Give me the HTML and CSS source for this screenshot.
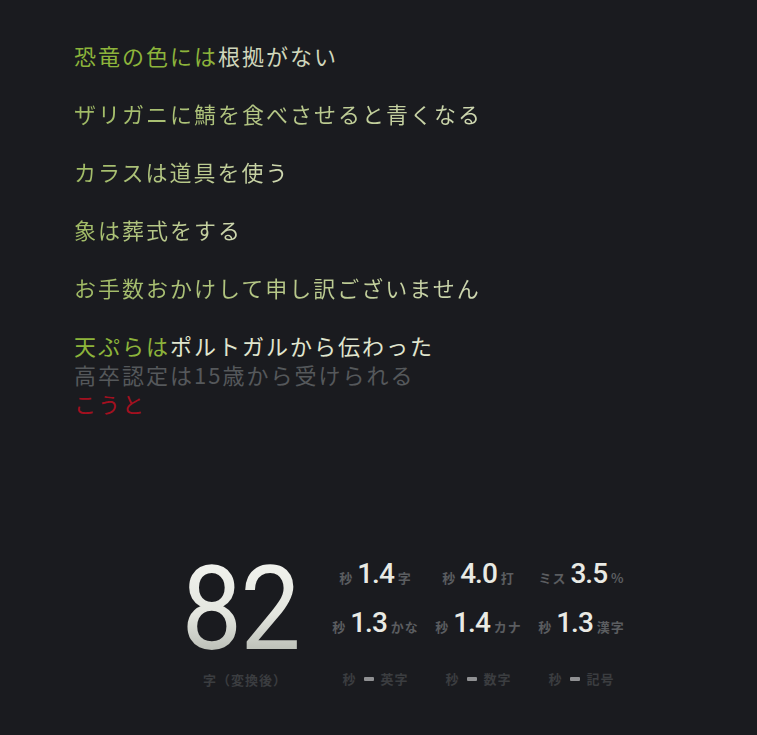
FILE: index.html
```html
<!DOCTYPE html>
<html lang="ja">
<head>
<meta charset="utf-8">
<title>タイピング</title>
<link rel="stylesheet" href="styles.css">
</head>
<body>
<main class="app">
  <section class="lines">
    <p class="line gap"><span class="typed">恐竜の色には</span><span class="rest">根拠がない</span></p>
    <p class="line gap"><span class="past">ザリガニに鯖を食べさせると青くなる</span></p>
    <p class="line gap"><span class="past">カラスは道具を使う</span></p>
    <p class="line gap"><span class="past">象は葬式をする</span></p>
    <p class="line gap"><span class="past">お手数おかけして申し訳ございません</span></p>
    <p class="line"><span class="typed">天ぷらは</span><span class="rest bright">ポルトガルから伝わった</span></p>
    <p class="line"><span class="next">高卒認定は15歳から受けられる</span></p>
    <p class="line"><span class="input">こうと</span></p>
  </section>

  <section class="stats">
    <div class="count">
      <div class="big">82</div>
      <div class="big-label">字（変換後）</div>
    </div>
    <div class="grid">
      <div class="cell"><span class="unit">秒</span><span class="num">1.4</span><span class="unit">字</span></div>
      <div class="cell"><span class="unit">秒</span><span class="num">4.0</span><span class="unit">打</span></div>
      <div class="cell"><span class="unit">ミス</span><span class="num">3.5</span><span class="unit">%</span></div>
      <div class="cell"><span class="unit">秒</span><span class="num">1.3</span><span class="unit">かな</span></div>
      <div class="cell"><span class="unit">秒</span><span class="num">1.4</span><span class="unit">カナ</span></div>
      <div class="cell"><span class="unit">秒</span><span class="num">1.3</span><span class="unit">漢字</span></div>
      <div class="cell dim"><span class="unit">秒</span><span class="dash"></span><span class="unit">英字</span></div>
      <div class="cell dim"><span class="unit">秒</span><span class="dash"></span><span class="unit">数字</span></div>
      <div class="cell dim"><span class="unit">秒</span><span class="dash"></span><span class="unit">記号</span></div>
    </div>
  </section>
</main>
</body>
</html>
```

FILE: styles.css
```css
html, body {
  margin: 0;
  padding: 0;
  background: #1a1b1f;
  height: 100%;
}

body {
  font-family: "Noto Sans CJK JP", "Noto Sans", sans-serif;
}

.app {
  display: flex;
  flex-direction: column;
  min-height: 735px;
  box-sizing: border-box;
  padding: 41px 0 0 74px;
}

.lines {
  display: flex;
  flex-direction: column;
}

.line {
  margin: 0;
  font-size: 22px;
  line-height: 29px;
  height: 29px;
  letter-spacing: 2px;
  white-space: nowrap;
}

.line.gap {
  margin-bottom: 29px;
}

.typed {
  color: #8db43b;
}

.rest {
  color: #cfd6bb;
}

.rest.bright {
  color: #e0e6cf;
}

.past {
  display: inline-block;
  background: linear-gradient(90deg, #a0bb64 0%, #b9c98c 55%, #cfd8b2 100%);
  -webkit-background-clip: text;
  background-clip: text;
  color: transparent;
}

.next {
  color: #55585b;
}

.input {
  color: #a3101f;
}

.stats {
  display: flex;
  align-items: flex-start;
  margin-top: 141px;
  margin-left: 104px;
}

.count {
  display: flex;
  flex-direction: column;
  align-items: center;
  width: 124px;
}

.big {
  font-family: "Roboto", "Liberation Sans", sans-serif;
  font-weight: 400;
  font-size: 116px;
  line-height: 100px;
  height: 100px;
  transform: scaleX(0.93);
  letter-spacing: -2px;
  background: linear-gradient(180deg, #f2f3ee 0%, #e4e6df 55%, #b3b7af 100%);
  -webkit-background-clip: text;
  background-clip: text;
  color: transparent;
}

.big-label {
  margin-top: 11px;
  padding-left: 10px;
  font-size: 13px;
  font-weight: 700;
  color: #3b3d40;
  letter-spacing: 1px;
}

.grid {
  display: grid;
  grid-template-columns: repeat(3, 103px);
  grid-auto-rows: 49px;
  margin-left: 22px;
  margin-top: -1px;
}

.cell {
  display: flex;
  align-items: baseline;
  justify-content: center;
  gap: 4px;
  line-height: 32px;
}

.num {
  font-family: "Roboto", "Liberation Sans", sans-serif;
  font-size: 28px;
  font-weight: 500;
  color: #e9eae4;
  letter-spacing: -1px;
}

.unit {
  font-size: 13px;
  font-weight: 700;
  color: #5b5d60;
  letter-spacing: 1px;
}

.cell.dim {
  align-items: center;
  gap: 7px;
  margin-top: -3px;
}

.cell.dim .unit {
  color: #3b3d40;
}

.dash {
  display: inline-block;
  width: 10px;
  height: 4px;
  border-radius: 1px;
  background: #8f9092;
}
```
